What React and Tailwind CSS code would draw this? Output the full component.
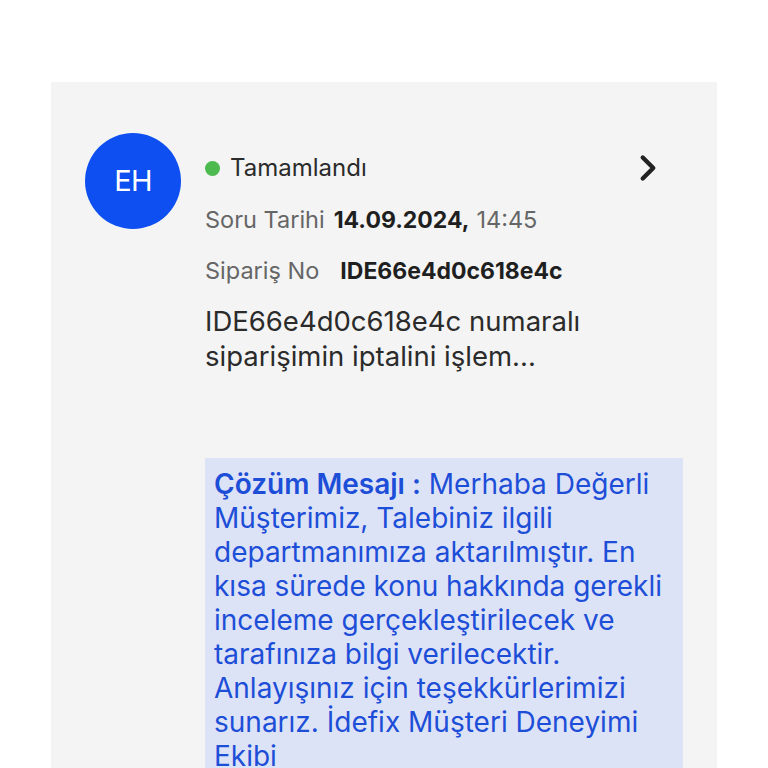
import { ChevronRight } from 'lucide-react'

export default function App() {
  return (
    <div className="min-h-screen bg-white pt-[82px] pl-[51px] pr-[51px] font-['Inter',sans-serif]">
      <div className="bg-[#f4f4f4] min-h-[686px] pl-[34px] pr-[34px] pt-[51px] flex gap-6">
        <div className="w-24 h-24 shrink-0 rounded-full bg-[#0d4ff0] flex items-center justify-center text-white text-[29px] tracking-tight">
          EH
        </div>
        <div className="flex-1 min-w-0">
          <div className="flex items-center justify-between h-[70px]">
            <div className="flex items-center gap-[10px] text-[24px] text-[#2b2b2b]">
              <span className="w-[15px] h-[15px] rounded-full bg-[#4cba4f]"></span>
              Tamamlandı
            </div>
            <ChevronRight className="w-[42px] h-[42px] text-[#222] mr-[14px]" strokeWidth={2.5} />
          </div>
          <div className="text-[23.5px] text-[#666] h-[34px] flex items-center">
            Soru Tarihi
            <span className="font-bold text-[#1f1f1f] ml-[9px] text-[23px]">14.09.2024,</span>
            <span className="ml-[7px]">14:45</span>
          </div>
          <div className="text-[23.5px] text-[#666] h-[34px] mt-[17px] flex items-center">
            Sipariş No
            <span className="font-bold text-[#1f1f1f] ml-[21px] text-[23px]">IDE66e4d0c618e4c</span>
          </div>
          <p className="text-[27.5px] leading-[35px] text-[#2b2b2b] mt-[16px] w-[420px]">
            IDE66e4d0c618e4c numaralı siparişimin iptalini işlem...
          </p>
          <div className="mt-[84px] bg-[#dde3f6] px-[9px] pt-[9px] pb-4 text-[28px] leading-[34px] text-[#1d4ed8]">
            <span className="font-semibold">Çözüm Mesajı :</span> Merhaba Değerli Müşterimiz, Talebiniz ilgili departmanımıza aktarılmıştır. En kısa sürede konu hakkında gerekli inceleme gerçekleştirilecek ve tarafınıza bilgi verilecektir. Anlayışınız için teşekkürlerimizi sunarız. İdefix Müşteri Deneyimi Ekibi
          </div>
        </div>
      </div>
    </div>
  )
}
